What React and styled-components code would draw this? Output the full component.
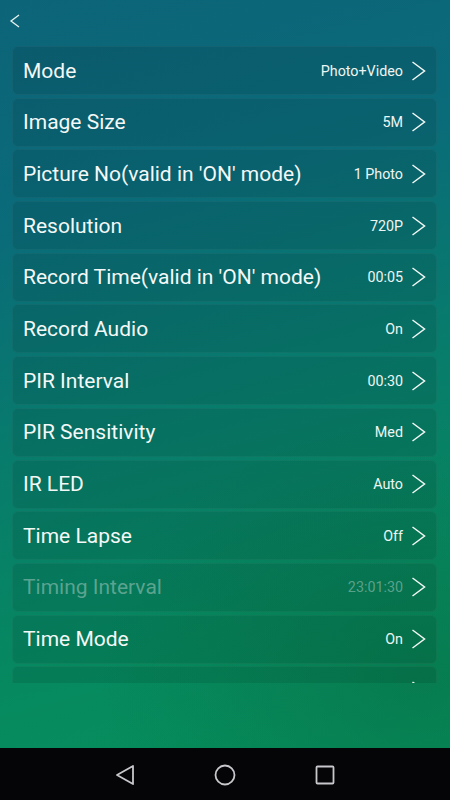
import React from "react";
import styled, { createGlobalStyle } from "styled-components";

const GlobalStyle = createGlobalStyle`
  html, body {
    margin: 0;
    padding: 0;
    width: 450px;
    height: 800px;
    overflow: hidden;
  }
  body {
    font-family: Roboto, "Noto Sans", sans-serif;
  }
`;

const Screen = styled.div`
  width: 450px;
  height: 800px;
  display: flex;
  flex-direction: column;
  background:
    radial-gradient(ellipse 320px 260px at 420px 680px, rgba(8, 110, 70, 0.55), rgba(8, 110, 70, 0) 100%),
    linear-gradient(165deg, #0c6478 0%, #0a6b79 25%, #087c6c 50%, #06895f 75%, #05925a 100%);
`;

const Header = styled.div`
  height: 46px;
  padding-left: 9px;
  display: flex;
  align-items: flex-start;
  padding-top: 13px;
  box-sizing: border-box;
`;

const BackIcon = styled.svg`
  width: 12px;
  height: 16px;
`;

const List = styled.div`
  margin: 0 13px 0 12px;
  height: 637px;
  overflow: hidden;
  display: flex;
  flex-direction: column;
  gap: 2.7px;
`;

const Row = styled.div`
  flex: 0 0 49px;
  border-radius: 6px;
  background: rgba(0, 0, 0, 0.09);
  box-shadow: inset 0 0 0 1px rgba(255, 255, 255, 0.04);
  display: flex;
  align-items: center;
  padding: 0 11px 0 11px;
`;

const Label = styled.span`
  flex: 1;
  font-size: 21px;
  color: ${p => (p.$dim ? "rgba(200, 220, 215, 0.45)" : "#f4f8f7")};
  white-space: nowrap;
`;

const Value = styled.span`
  font-size: 14.3px;
  color: ${p => (p.$dim ? "rgba(200, 220, 215, 0.45)" : "#eef5f3")};
  margin-right: 8px;
`;

const Chevron = styled.svg`
  width: 15px;
  height: 22px;
`;

const Spacer = styled.div`
  flex: 1;
`;

const NavBar = styled.div`
  height: 52px;
  background: #050508;
  display: flex;
  align-items: center;
  justify-content: center;
  gap: 78px;
  padding-top: 2px;
  box-sizing: border-box;
`;

const NavIcon = styled.svg`
  width: 22px;
  height: 22px;
`;

const rows = [
  ["Mode", "Photo+Video"],
  ["Image Size", "5M"],
  ["Picture No(valid in 'ON' mode)", "1 Photo"],
  ["Resolution", "720P"],
  ["Record Time(valid in 'ON' mode)", "00:05"],
  ["Record Audio", "On"],
  ["PIR Interval", "00:30"],
  ["PIR Sensitivity", "Med"],
  ["IR LED", "Auto"],
  ["Time Lapse", "Off"],
  ["Timing Interval", "23:01:30", true],
  ["Time Mode", "On"],
  ["Time Stamp", "On"],
];

function SettingRow({ label, value, dim }) {
  return (
    <Row>
      <Label $dim={dim}>{label}</Label>
      <Value $dim={dim}>{value}</Value>
      <Chevron viewBox="0 0 15 22">
        <path d="M1.5 2 L13.5 11 L1.5 20" fill="none" stroke="#f2f7f5" strokeWidth="1.5" />
      </Chevron>
    </Row>
  );
}

export default function App() {
  return (
    <>
      <GlobalStyle />
      <Screen>
        <Header>
          <BackIcon viewBox="0 0 12 16">
            <path d="M10 2 L2 8 L10 14" fill="none" stroke="#e8f2f0" strokeWidth="1.3" />
          </BackIcon>
        </Header>
        <List>
          {rows.map(([l, v, d]) => (
            <SettingRow key={l} label={l} value={v} dim={d} />
          ))}
        </List>
        <Spacer />
        <NavBar>
          <NavIcon viewBox="0 0 22 22">
            <path d="M19 2 L3 11 L19 20 Z" fill="none" stroke="#c8c8cc" strokeWidth="1.8" strokeLinejoin="round" />
          </NavIcon>
          <NavIcon viewBox="0 0 22 22">
            <circle cx="11" cy="11" r="9.5" fill="none" stroke="#c8c8cc" strokeWidth="1.8" />
          </NavIcon>
          <NavIcon viewBox="0 0 22 22">
            <rect x="2.5" y="2.5" width="17" height="17" rx="1" fill="none" stroke="#c8c8cc" strokeWidth="1.8" />
          </NavIcon>
        </NavBar>
      </Screen>
    </>
  );
}
